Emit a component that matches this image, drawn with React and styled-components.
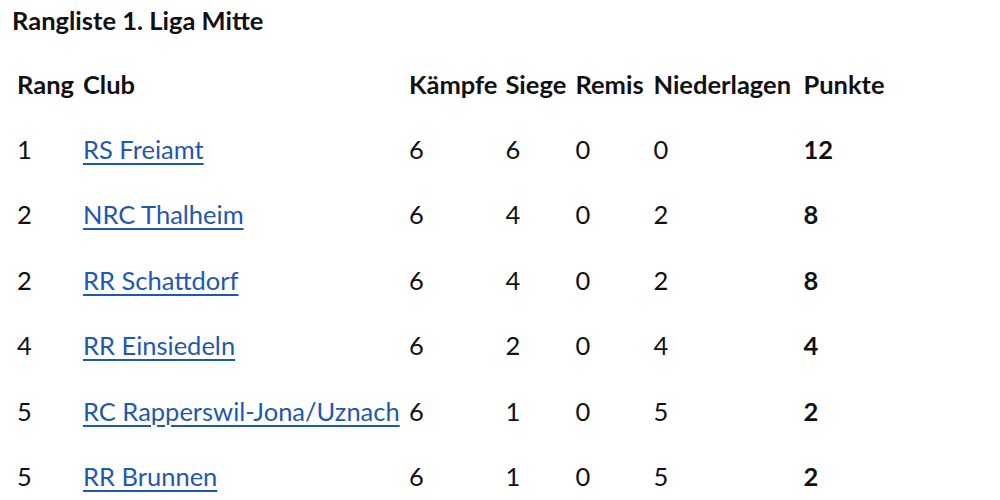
import React from "react"
import styled, { createGlobalStyle } from "styled-components"

const GlobalStyle = createGlobalStyle`
  body {
    margin: 0;
    background: #fff;
    font-family: Lato, "Open Sans", sans-serif;
    color: #111;
  }
`

const Page = styled.div`
  padding: 6px 12px;
`

const Title = styled.h1`
  margin: 0;
  font-size: 25.5px;
  font-weight: 700;
  line-height: 28px;
`

const Table = styled.table`
  margin-top: 17px;
  margin-left: 1px;
  border-collapse: collapse;
  table-layout: fixed;
  font-size: 25.5px;
`

const Cell = styled.td`
  height: 65.4px;
  padding: 0 4px;
  vertical-align: middle;
  white-space: nowrap;
  font-weight: ${props => props.bold ? 700 : 400};
`

const HeadCell = styled(Cell).attrs({ as: "th" })`
  font-weight: 700;
  text-align: left;
`

const ClubLink = styled.a`
  color: #1f58b0;
  text-decoration: underline;
  text-decoration-thickness: 2px;
  text-underline-offset: 4px;
`

const widths = [66, 326, 96, 70, 78, 150, 90]

const rows = [
  ["1", "RS Freiamt", 6, 6, 0, 0, 12],
  ["2", "NRC Thalheim", 6, 4, 0, 2, 8],
  ["2", "RR Schattdorf", 6, 4, 0, 2, 8],
  ["4", "RR Einsiedeln", 6, 2, 0, 4, 4],
  ["5", "RC Rapperswil-Jona/Uznach", 6, 1, 0, 5, 2],
  ["5", "RR Brunnen", 6, 1, 0, 5, 2],
]

const headers = ["Rang", "Club", "Kämpfe", "Siege", "Remis", "Niederlagen", "Punkte"]

export default function App() {
  return (
    <Page>
      <GlobalStyle />
      <Title>Rangliste 1. Liga Mitte</Title>
      <Table>
        <colgroup>
          {widths.map((w, i) => <col key={i} style={{ width: w }} />)}
        </colgroup>
        <thead>
          <tr>
            {headers.map(h => <HeadCell key={h}>{h}</HeadCell>)}
          </tr>
        </thead>
        <tbody>
          {rows.map(([rang, club, k, s, r, n, p], i) => (
            <tr key={i}>
              <Cell>{rang}</Cell>
              <Cell><ClubLink href="#">{club}</ClubLink></Cell>
              <Cell>{k}</Cell>
              <Cell>{s}</Cell>
              <Cell>{r}</Cell>
              <Cell>{n}</Cell>
              <Cell bold>{p}</Cell>
            </tr>
          ))}
        </tbody>
      </Table>
    </Page>
  )
}
